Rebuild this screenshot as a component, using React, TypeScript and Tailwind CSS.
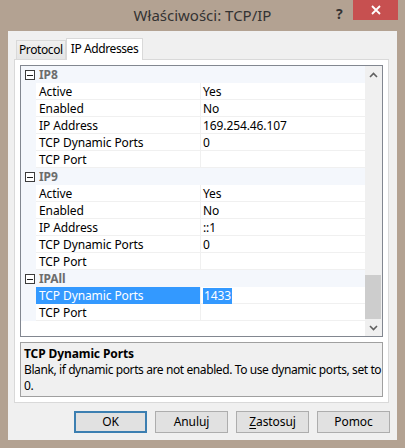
import React from 'react';

type Row = { label: string; value: string; selected?: boolean };
type Group = { name: string; rows: Row[] };

const groups: Group[] = [
  {
    name: 'IP8',
    rows: [
      { label: 'Active', value: 'Yes' },
      { label: 'Enabled', value: 'No' },
      { label: 'IP Address', value: '169.254.46.107' },
      { label: 'TCP Dynamic Ports', value: '0' },
      { label: 'TCP Port', value: '' },
    ],
  },
  {
    name: 'IP9',
    rows: [
      { label: 'Active', value: 'Yes' },
      { label: 'Enabled', value: 'No' },
      { label: 'IP Address', value: '::1' },
      { label: 'TCP Dynamic Ports', value: '0' },
      { label: 'TCP Port', value: '' },
    ],
  },
  {
    name: 'IPAll',
    rows: [
      { label: 'TCP Dynamic Ports', value: '1433', selected: true },
      { label: 'TCP Port', value: '' },
    ],
  },
];

const font = { fontFamily: '"Noto Sans", "Open Sans", sans-serif' };

const MinusBox = () => (
  <div className="w-[10px] h-[10px] border border-[#3c3c3c] bg-white flex items-center justify-center">
    <div className="w-[6px] h-px bg-[#1e1e1e]" />
  </div>
);

const Chevron = ({ up }: { up?: boolean }) => (
  <svg width="9" height="6" viewBox="0 0 9 6" className="block">
    <path
      d={up ? 'M1 5 L4.5 1.5 L8 5' : 'M1 1 L4.5 4.5 L8 1'}
      fill="none"
      stroke="#606060"
      strokeWidth="1.6"
    />
  </svg>
);

const Btn = ({ children, primary }: { children: React.ReactNode; primary?: boolean }) => (
  <button
    className={
      'w-[73px] h-[22px] bg-[#e1e1e1] text-[12px] text-black leading-none border ' +
      (primary ? 'border-[#3c7fb1] shadow-[inset_0_0_0_1px_#3c7fb1]' : 'border-[#adadad]')
    }
  >
    {children}
  </button>
);

export default function App() {
  return (
    <div className="w-[405px] h-[448px] bg-[#b3a292] flex flex-col overflow-hidden tracking-[-0.1px]" style={font}>
      {/* title bar */}
      <div className="h-[31px] shrink-0 flex items-start relative">
        <div className="flex-1 text-center text-[15px] text-[#333333] pt-[4px] tracking-normal">Właściwości: TCP/IP</div>
        <div className="absolute left-[336px] top-[3px] text-[14px] font-bold text-[#333]">?</div>
        <div className="absolute left-[353px] top-0 w-[45px] h-[20px] bg-[#c75050] flex items-center justify-center">
          <svg width="10" height="10" viewBox="0 0 10 10">
            <path d="M1 1 L9 9 M9 1 L1 9" stroke="white" strokeWidth="1.8" />
          </svg>
        </div>
      </div>

      {/* client */}
      <div className="mx-[8px] h-[409px] bg-[#f0f0f0] flex flex-col pt-[7px] px-[6px]">
        {/* tabs */}
        <div className="flex items-end h-[21px] pl-[2px] relative z-10">
          <div className="h-[19px] px-[2px] border border-[#d9d9d9] border-b-0 bg-gradient-to-b from-[#f0f0f0] to-[#e5e5e5] text-[12px] leading-[18px] text-black tracking-[-0.4px]">
            Protocol
          </div>
          <div className="h-[22px] px-[4px] border border-[#d9d9d9] border-b-0 bg-white text-[12px] leading-[20px] text-black -mb-px tracking-[-0.4px]">
            IP Addresses
          </div>
        </div>

        {/* tab panel */}
        <div className="w-[375px] h-[344px] bg-white border border-[#d9d9d9] p-[5px] flex flex-col gap-[5px]">
          {/* property grid */}
          <div className="h-[272px] border border-[#828790] flex bg-white">
            <div className="flex-1 flex flex-col">
              {groups.map((g) => (
                <React.Fragment key={g.name}>
                  <div className="h-[17px] bg-[#f4f7fc] flex items-center pt-px">
                    <div className="w-[15px] flex justify-center pl-[2px]">
                      <MinusBox />
                    </div>
                    <div className="pl-[3px] text-[12px] font-bold text-[#6d6d6d] leading-none">{g.name}</div>
                  </div>
                  {g.rows.map((r, i) => (
                    <div key={i} className="h-[17px] flex">
                      <div className="w-[15px] bg-[#f4f7fc]" />
                      <div
                        className={
                          'w-[164px] flex items-center pl-[3px] pt-px text-[12px] leading-none border-b ' +
                          (r.selected ? 'bg-[#3399ff] text-white border-[#3399ff]' : 'text-black border-[#f0f0f0]')
                        }
                      >
                        {r.label}
                      </div>
                      <div className="w-px bg-[#f0f0f0]" />
                      <div className="flex-1 flex items-center pl-[2px] pt-px text-[12px] leading-none text-black border-b border-[#f0f0f0]">
                        {r.selected ? (
                          <span className="bg-[#3399ff] text-white px-px py-[2px]">{r.value}</span>
                        ) : (
                          r.value
                        )}
                      </div>
                    </div>
                  ))}
                </React.Fragment>
              ))}
            </div>
            {/* scrollbar */}
            <div className="w-[17px] bg-[#f0f0f0] flex flex-col">
              <div className="h-[17px] flex items-center justify-center">
                <Chevron up />
              </div>
              <div className="flex-1 flex flex-col pr-px">
                <div className="h-[192px]" />
                <div className="h-[44px] bg-[#cdcdcd]" />
              </div>
              <div className="h-[17px] flex items-center justify-center">
                <Chevron />
              </div>
            </div>
          </div>

          {/* description */}
          <div className="h-[55px] border border-[#a0a0a0] bg-[#f0f0f0] px-[3px] pt-[3px] text-[12px] text-black">
            <div className="font-bold leading-[16px]">TCP Dynamic Ports</div>
            <div className="leading-[16px] tracking-[-0.4px] whitespace-nowrap">
              Blank, if dynamic ports are not enabled. To use dynamic ports, set to
              <br />
              0.
            </div>
          </div>
        </div>

        {/* buttons */}
        <div className="flex justify-end gap-[8px] mt-[8px] pr-[1px]">
          <Btn primary>OK</Btn>
          <Btn>Anuluj</Btn>
          <Btn>
            <span className="underline underline-offset-2">Z</span>astosuj
          </Btn>
          <Btn>Pomoc</Btn>
        </div>
      </div>
    </div>
  );
}
